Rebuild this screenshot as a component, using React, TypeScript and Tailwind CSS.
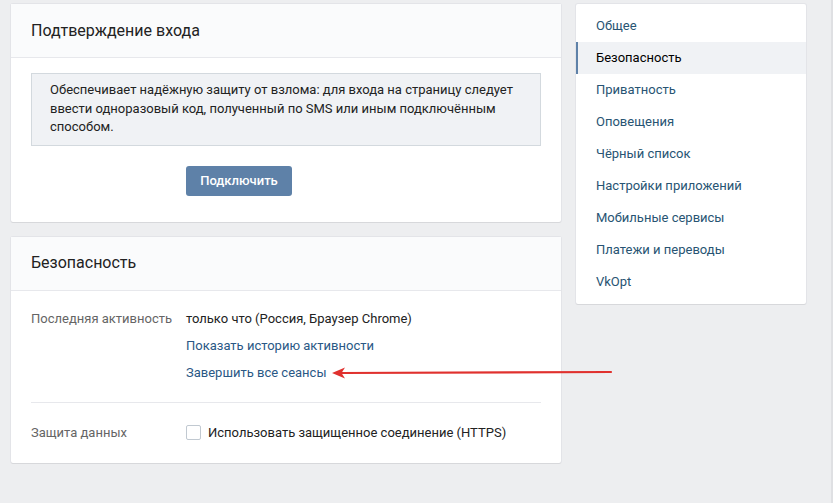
import { useState } from 'react';

const menu = [
  'Общее',
  'Безопасность',
  'Приватность',
  'Оповещения',
  'Чёрный список',
  'Настройки приложений',
  'Мобильные сервисы',
  'Платежи и переводы',
  'VkOpt',
];

const card = 'bg-white rounded-[2px] shadow-[0_1px_0_0_#d7d8db,0_0_0_1px_#e3e4e8]';

export default function App() {
  const [https, setHttps] = useState(false);
  const active = 'Безопасность';

  return (
    <div className="flex h-[503px] w-full bg-[#edeef0] font-['Roboto',sans-serif] text-[13px] text-black">
      <div className="flex flex-1 gap-[15px] pl-[11px] pt-[4px]">
        {/* Main column */}
        <div className="flex w-[550px] flex-col gap-[15px]">
          {/* Login confirmation */}
          <div className={card}>
            <div className="flex h-[54px] items-center border-b border-[#e7e8ec] bg-[#fafbfc] px-[20px] text-[16px] text-[#222]">
              Подтверждение входа
            </div>
            <div className="px-[20px] pb-[26px] pt-[15px]">
              <div className="border border-[#d3d9de] bg-[#f0f2f5] pb-[8px] pl-[18px] pr-[20px] pt-[7px] leading-[18.5px] text-[#222]">
                Обеспечивает надёжную защиту от взлома: для входа на страницу следует ввести одноразовый код, полученный по SMS или иным подключённым способом.
              </div>
              <button className="ml-[155px] mt-[20px] h-[30px] w-[106px] rounded-[3px] bg-[#5e81a8] text-[13px] font-medium text-white hover:bg-[#6888ad]">
                Подключить
              </button>
            </div>
          </div>

          {/* Security */}
          <div className={card}>
            <div className="flex h-[54px] items-center border-b border-[#e7e8ec] bg-[#fafbfc] px-[20px] text-[16px] text-[#222]">
              Безопасность
            </div>
            <div className="px-[20px] pb-[21px] pt-[19px]">
              <div className="flex leading-[18px]">
                <div className="w-[155px] text-[#656565]">Последняя активность</div>
                <div className="flex flex-col gap-[9px]">
                  <span className="text-[#222]">только что (Россия, Браузер Chrome)</span>
                  <a className="text-[#2a5885] hover:underline" href="#">Показать историю активности</a>
                  <div className="relative">
                    <a className="text-[#2a5885] hover:underline" href="#">Завершить все сеансы</a>
                    {/* Annotation arrow */}
                    <svg className="absolute left-[145px] top-[3px]" width="282" height="12" viewBox="0 0 282 12">
                      <line x1="10" y1="6" x2="280" y2="5" stroke="#e0312e" strokeWidth="2.2" strokeLinecap="round" />
                      <path d="M1 6 L14 0.5 L10.5 6 L14 11.5 Z" fill="#e0312e" />
                    </svg>
                  </div>
                </div>
              </div>
              <div className="mb-[21px] mt-[20px] h-px bg-[#e7e8ec]" />
              <div className="flex items-center leading-[18px]">
                <div className="w-[155px] text-[#656565]">Защита данных</div>
                <label className="flex cursor-pointer items-center gap-[7px] text-[#222]">
                  <span
                    onClick={() => setHttps(!https)}
                    className="flex h-[15px] w-[15px] items-center justify-center rounded-[2px] border border-[#c1c9d1] bg-white"
                  >
                    {https && (
                      <svg width="10" height="8" viewBox="0 0 10 8">
                        <path d="M1 4 L4 7 L9 1" fill="none" stroke="#5e81a8" strokeWidth="1.6" />
                      </svg>
                    )}
                  </span>
                  Использовать защищенное соединение (HTTPS)
                </label>
              </div>
            </div>
          </div>
        </div>

        {/* Right menu */}
        <div className={`${card} h-fit w-[230px] py-[6px]`}>
          {menu.map((item) => (
            <div
              key={item}
              className={
                item === active
                  ? 'flex h-[32px] items-center border-l-2 border-[#5e81a8] bg-[#f0f2f5] pl-[18px] text-black'
                  : 'flex h-[32px] items-center pl-[20px] text-[#285473] hover:bg-[#f0f2f5]'
              }
            >
              {item}
            </div>
          ))}
        </div>
      </div>
      <div className="w-[2px] bg-[#dfe0e3]" />
    </div>
  );
}
